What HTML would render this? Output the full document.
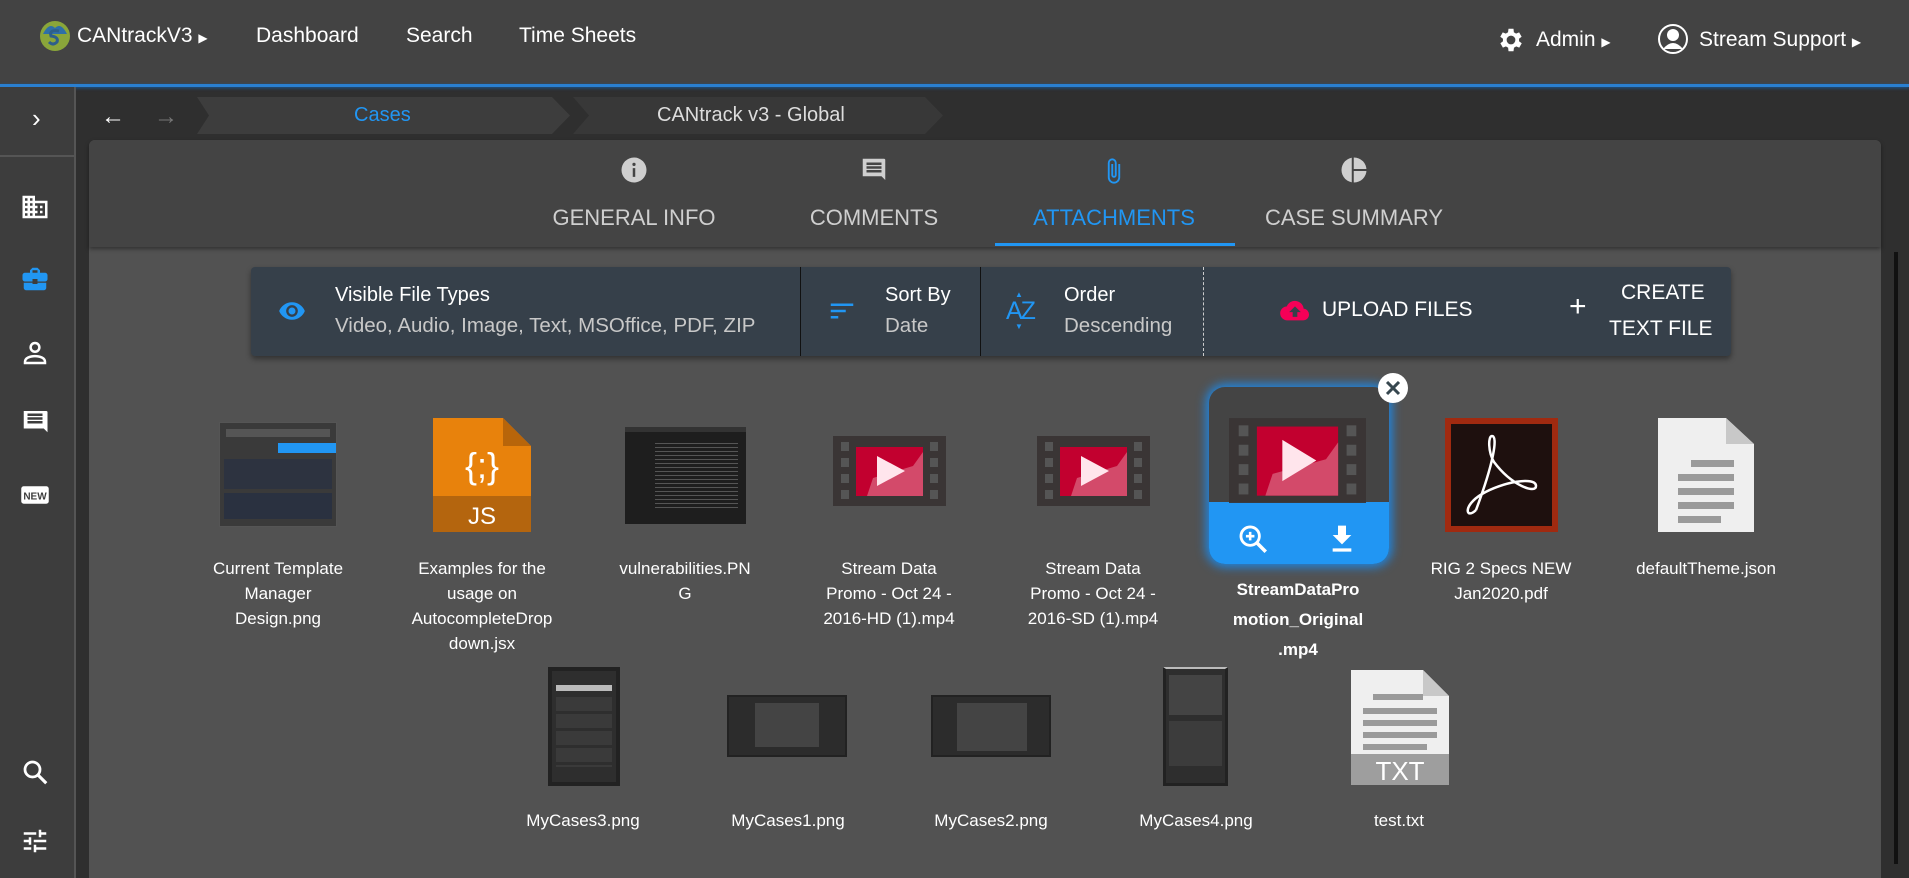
<!DOCTYPE html>
<html><head><meta charset="utf-8"><style>
*{box-sizing:border-box;margin:0;padding:0}
body{width:1909px;height:878px;overflow:hidden;background:#2f2f2f;font-family:"Liberation Sans",sans-serif;color:#fff;position:relative}
.a{position:absolute}
.hdr{left:0;top:0;width:1909px;height:85px;background:#434343}
.nav{font-size:21px;top:24px;color:#fff}
.blue{left:0;top:84px;width:1909px;height:3px;background:#2a7fd0;box-shadow:0 1px 3px #1a5a9a}
.side{left:0;top:87px;width:76px;height:791px;background:#3d3d3d;border-right:2px solid #555}
.panel{left:89px;top:140px;width:1792px;height:738px;background:#525252;border-radius:6px 6px 0 0}
.tabs{left:89px;top:140px;width:1792px;height:107px;background:#444;border-radius:6px 6px 0 0;box-shadow:0 2px 4px rgba(0,0,0,.4)}
.tl{top:205px;font-size:22px;color:#cfcfcf;transform:translateX(-50%);white-space:nowrap}
.tb{left:251px;top:267px;width:1480px;height:89px;background:#36404a;border-radius:4px;box-shadow:0 3px 6px rgba(0,0,0,.4)}
.t1{font-size:20px;color:#fff}
.t2{font-size:20.5px;color:#c8c8c8}
.lab{font-size:17px;line-height:25px;color:#fff;text-align:center;width:160px;transform:translateX(-50%)}
</style></head><body>
<div class="a hdr"></div>
<svg class="a" style="left:39px;top:20px" width="32" height="32" viewBox="0 0 32 32"><circle cx="16" cy="16" r="15" fill="#8aa63a"/><path d="M4 14 Q10 2 16 8 Q22 2 28 14" fill="#2e6fa8"/><path d="M20 11 Q10 9 12 16 Q20 17 18 22 Q14 26 10 22" stroke="#2e5f8a" stroke-width="3" fill="none"/></svg>
<div class="a nav" style="left:77px">CANtrackV3 <span style="font-size:12px">&#9654;</span></div>
<div class="a nav" style="left:256px">Dashboard</div>
<div class="a nav" style="left:406px">Search</div>
<div class="a nav" style="left:519px">Time Sheets</div>
<svg class="a" style="left:1496px;top:25px" width="30" height="30" viewBox="0 0 24 24"><path fill="#fff" d="M19.4 13a7.5 7.5 0 000-2l2.1-1.6-2-3.5-2.5 1a7 7 0 00-1.7-1L15 3h-4l-.4 2.9a7 7 0 00-1.7 1l-2.5-1-2 3.5L6.6 11a7.5 7.5 0 000 2l-2.1 1.6 2 3.5 2.5-1a7 7 0 001.7 1L11 21h4l.4-2.9a7 7 0 001.7-1l2.5 1 2-3.5zM13 15.5a3.5 3.5 0 110-7 3.5 3.5 0 010 7z" transform="translate(-1 0)"/></svg>
<div class="a nav" style="left:1536px;top:28px">Admin <span style="font-size:12px">&#9654;</span></div>
<svg class="a" style="left:1657px;top:23px" width="32" height="32" viewBox="0 0 32 32"><circle cx="16" cy="16" r="14" fill="none" stroke="#fff" stroke-width="2"/><circle cx="16" cy="12" r="6" fill="#fff"/><path d="M6 26 Q16 14 26 26" fill="#fff"/></svg>
<div class="a nav" style="left:1699px;top:28px">Stream Support <span style="font-size:12px">&#9654;</span></div>
<div class="a blue"></div>
<div class="a side"></div>
<div class="a" style="left:0;top:155px;width:76px;height:2px;background:#555"></div>
<div class="a" style="left:32px;top:103px;font-size:26px;color:#fff">&#8250;</div>
<svg class="a" style="left:20px;top:192px" width="30" height="30" viewBox="0 0 24 24"><path fill="#fff" d="M12 7V3H2v18h20V7H12zM6 19H4v-2h2v2zm0-4H4v-2h2v2zm0-4H4V9h2v2zm0-4H4V5h2v2zm4 12H8v-2h2v2zm0-4H8v-2h2v2zm0-4H8V9h2v2zm0-4H8V5h2v2zm10 12h-8v-2h2v-2h-2v-2h2v-2h-2V9h8v10zm-2-8h-2v2h2v-2zm0 4h-2v2h2v-2z"/></svg>
<svg class="a" style="left:20px;top:264px" width="30" height="30" viewBox="0 0 24 24"><path fill="#2196f3" d="M10 16v-1H3l0 4c0 1.1.9 2 2 2h14c1.1 0 2-.9 2-2v-4h-7v1h-4zm10-9h-4V5l-2-2h-4L8 5v2H4c-1.1 0-2 .9-2 2v3c0 1.1.9 2 2 2h6v-2h4v2h6c1.1 0 2-.9 2-2V9c0-1.1-.9-2-2-2zm-6 0h-4V5h4v2z"/></svg>
<svg class="a" style="left:20px;top:338px" width="30" height="30" viewBox="0 0 24 24"><path fill="none" stroke="#fff" stroke-width="2" d="M12 4a3.5 3.5 0 110 7 3.5 3.5 0 010-7zM4 19c0-3 4-4.5 8-4.5s8 1.5 8 4.5v1H4z"/></svg>
<svg class="a" style="left:20px;top:406px" width="30" height="30" viewBox="0 0 24 24"><path fill="#fff" d="M21 4H3v14h16l3 3V5a1 1 0 00-1-1zM18 14H6v-2h12zm0-3H6V9h12zm0-3H6V6h12z"/></svg>
<svg class="a" style="left:20px;top:480px" width="30" height="30" viewBox="0 0 24 24"><rect x="1" y="5" width="22" height="14" rx="2" fill="#fff"/><text x="12" y="15.5" font-size="8" font-weight="bold" text-anchor="middle" fill="#3d3d3d" font-family="Liberation Sans">NEW</text></svg>
<svg class="a" style="left:20px;top:757px" width="30" height="30" viewBox="0 0 24 24"><circle cx="10" cy="10" r="6" fill="none" stroke="#fff" stroke-width="2.2"/><path d="M14.5 14.5L21 21" stroke="#fff" stroke-width="2.5"/></svg>
<svg class="a" style="left:20px;top:826px" width="30" height="30" viewBox="0 0 24 24"><path fill="#fff" d="M3 17v2h6v-2H3zM3 5v2h10V5H3zm10 16v-2h8v-2h-8v-2h-2v6h2zM7 9v2H3v2h4v2h2V9H7zm14 4v-2H11v2h10zm-6-4h2V7h4V5h-4V3h-2v6z"/></svg>
<div class="a" style="left:101px;top:103px;font-size:24px;color:#fff">&#8592;</div>
<div class="a" style="left:154px;top:103px;font-size:24px;color:#777">&#8594;</div>
<svg class="a" style="left:197px;top:97px" width="760" height="37"><polygon points="0,0 355,0 373,18.5 355,37 0,37 12,18.5" fill="#3d3d3d"/><polygon points="376,0 728,0 746,18.5 728,37 376,37 392,18.5" fill="#383838"/></svg>
<div class="a" style="left:354px;top:104px;font-size:20px;color:#2196f3">Cases</div>
<div class="a" style="left:657px;top:104px;font-size:20px;color:#ddd">CANtrack v3 - Global</div>
<div class="a panel"></div>
<div class="a tabs"></div>
<svg class="a" style="left:619px;top:155px" width="30" height="30" viewBox="0 0 24 24"><circle cx="12" cy="12" r="10" fill="#cfcfcf"/><rect x="11" y="10.5" width="2" height="7" fill="#444"/><circle cx="12" cy="7.5" r="1.3" fill="#444"/></svg>
<svg class="a" style="left:859px;top:155px" width="30" height="30" viewBox="0 0 24 24"><path fill="#cfcfcf" d="M21 3H3v14h15l3 3V4a1 1 0 00-1-1zM18 14H6v-2h12zm0-3H6V9h12zm0-3H6V6h12z"/></svg>
<svg class="a" style="left:1100px;top:155px" width="28" height="32" viewBox="0 0 24 24"><path fill="none" stroke="#2196f3" stroke-width="1.6" d="M16.5 6v11.5a4.5 4.5 0 01-9 0V5a3 3 0 016 0v10.5a1.5 1.5 0 01-3 0V6"/></svg>
<svg class="a" style="left:1339px;top:155px" width="30" height="30" viewBox="0 0 24 24"><circle cx="12" cy="12" r="10" fill="#cfcfcf"/><path d="M11 2v20M11 12h11" stroke="#444" stroke-width="1.6"/></svg>
<div class="a tl" style="left:634px">GENERAL INFO</div>
<div class="a tl" style="left:874px">COMMENTS</div>
<div class="a tl" style="left:1114px;color:#2196f3">ATTACHMENTS</div>
<div class="a tl" style="left:1354px">CASE SUMMARY</div>
<div class="a" style="left:995px;top:243px;width:240px;height:3px;background:#2196f3"></div>
<div class="a tb"></div>
<div class="a" style="left:800px;top:267px;width:1px;height:89px;background:#111"></div>
<div class="a" style="left:980px;top:267px;width:1px;height:89px;background:#111"></div>
<div class="a" style="left:1203px;top:267px;height:89px;border-left:1px dashed #ccc"></div>
<svg class="a" style="left:276px;top:297px" width="32" height="28" viewBox="0 0 24 24"><path fill="#2196f3" d="M12 4.5C7 4.5 2.7 7.6 1 12c1.7 4.4 6 7.5 11 7.5s9.3-3.1 11-7.5c-1.7-4.4-6-7.5-11-7.5zM12 17a5 5 0 110-10 5 5 0 010 10zm0-8a3 3 0 100 6 3 3 0 000-6z"/></svg>
<div class="a t1" style="left:335px;top:284px">Visible File Types</div>
<div class="a t2" style="left:335px;top:314px">Video, Audio, Image, Text, MSOffice, PDF, ZIP</div>
<svg class="a" style="left:827px;top:296px" width="30" height="30" viewBox="0 0 24 24"><path fill="#2196f3" d="M3 18h6v-2H3v2zM3 6v2h18V6H3zm0 7h12v-2H3v2z"/></svg>
<div class="a t1" style="left:885px;top:284px">Sort By</div>
<div class="a t2" style="left:885px;top:314px">Date</div>
<div class="a" style="left:1006px;top:297px;font-size:25px;color:#2196f3;letter-spacing:-2px">AZ</div>
<div class="a" style="left:1015px;top:290px;font-size:8px;color:#2196f3">&#9650;</div>
<div class="a" style="left:1015px;top:322px;font-size:8px;color:#2196f3">&#9660;</div>
<div class="a t1" style="left:1064px;top:284px">Order</div>
<div class="a t2" style="left:1064px;top:314px">Descending</div>
<svg class="a" style="left:1280px;top:297px" width="30" height="28" viewBox="0 0 24 24"><path fill="#f50057" d="M19.4 10A7.5 7.5 0 005 8a6 6 0 00.6 12h13a5 5 0 00.8-10zM14 13v4h-4v-4H7l5-5 5 5h-3z"/></svg>
<div class="a" style="left:1322px;top:298px;font-size:21px">UPLOAD FILES</div>
<div class="a" style="left:1569px;top:290px;font-size:30px;color:#fff">+</div>
<div class="a" style="left:1621px;top:281px;font-size:21px">CREATE</div>
<div class="a" style="left:1609px;top:317px;font-size:21px">TEXT FILE</div>
<div class="a" style="left:1894px;top:252px;width:4px;height:612px;background:#111"></div>
<!-- row1 -->
<div class="a" style="left:219px;top:422px;width:118px;height:105px;background:#3a3a3a;border:1px solid #555"><div style="margin:6px;height:8px;background:#555"></div><div style="margin:6px;height:10px;background:#2196f3;width:50%;margin-left:50%"></div><div style="margin:4px;height:30px;background:#2d3340"></div><div style="margin:4px;height:26px;background:#2a3140"></div></div>
<svg class="a" style="left:433px;top:418px" width="98" height="114" viewBox="0 0 98 114"><path d="M0 0h70l28 28v86H0z" fill="#e8820c"/><path d="M70 0v28h28z" fill="#b8650a"/><rect y="78" width="98" height="36" fill="#b4650e"/><text x="49" y="60" font-size="36" text-anchor="middle" fill="#fff" font-family="Liberation Sans">{;}</text><text x="49" y="106" font-size="24" text-anchor="middle" fill="#fff" font-family="Liberation Sans">JS</text></svg>
<div class="a" style="left:625px;top:427px;width:121px;height:97px;background:#1e1e1e;border-top:5px solid #333"><div style="margin:8px 8px 0 30px;height:70px;background:repeating-linear-gradient(#1e1e1e 0 3px,#555 3px 4px)"></div></div>
<svg class="a" style="left:833px;top:436px" width="113" height="70" viewBox="0 0 113 70"><rect width="113" height="70" fill="#3a3535"/><g fill="#555"><rect x="8" y="6" width="8" height="9"/><rect x="8" y="22" width="8" height="9"/><rect x="8" y="38" width="8" height="9"/><rect x="8" y="54" width="8" height="9"/><rect x="97" y="6" width="8" height="9"/><rect x="97" y="22" width="8" height="9"/><rect x="97" y="38" width="8" height="9"/><rect x="97" y="54" width="8" height="9"/></g><rect x="23" y="11" width="67" height="49" fill="#c2002f"/><path d="M34 60l6-18 40-12 10-14v44z" fill="#d34a6a"/><path d="M44 20l28 15-28 15z" fill="#ffe5ec"/></svg>
<svg class="a" style="left:1037px;top:436px" width="113" height="70" viewBox="0 0 113 70"><rect width="113" height="70" fill="#3a3535"/><g fill="#555"><rect x="8" y="6" width="8" height="9"/><rect x="8" y="22" width="8" height="9"/><rect x="8" y="38" width="8" height="9"/><rect x="8" y="54" width="8" height="9"/><rect x="97" y="6" width="8" height="9"/><rect x="97" y="22" width="8" height="9"/><rect x="97" y="38" width="8" height="9"/><rect x="97" y="54" width="8" height="9"/></g><rect x="23" y="11" width="67" height="49" fill="#c2002f"/><path d="M34 60l6-18 40-12 10-14v44z" fill="#d34a6a"/><path d="M44 20l28 15-28 15z" fill="#ffe5ec"/></svg>
<div class="a" style="left:1209px;top:387px;width:180px;height:177px;background:#444;border-radius:16px;box-shadow:0 0 10px 3px #1e88e5;overflow:hidden"><div style="position:absolute;left:0;bottom:0;width:180px;height:62px;background:#2196f3"></div></div>
<svg class="a" style="left:1229px;top:418px" width="137" height="85" viewBox="0 0 113 70"><rect width="113" height="70" fill="#3a3535"/><g fill="#555"><rect x="8" y="6" width="8" height="9"/><rect x="8" y="22" width="8" height="9"/><rect x="8" y="38" width="8" height="9"/><rect x="8" y="54" width="8" height="9"/><rect x="97" y="6" width="8" height="9"/><rect x="97" y="22" width="8" height="9"/><rect x="97" y="38" width="8" height="9"/><rect x="97" y="54" width="8" height="9"/></g><rect x="23" y="7" width="67" height="57" fill="#c2002f"/><path d="M30 64l6-18 44-12 10-14v44z" fill="#d34a6a"/><path d="M44 18l28 17-28 17z" fill="#ffe5ec"/></svg>
<svg class="a" style="left:1236px;top:522px" width="34" height="34" viewBox="0 0 24 24"><circle cx="10" cy="10" r="6.5" fill="none" stroke="#fff" stroke-width="2"/><path d="M14.5 14.5L21 21" stroke="#fff" stroke-width="2.5"/><path d="M10 7v6M7 10h6" stroke="#fff" stroke-width="1.8"/></svg>
<svg class="a" style="left:1326px;top:522px" width="32" height="34" viewBox="0 0 24 24"><path fill="#fff" d="M9 2h6v7h4l-7 7-7-7h4zM5 19h14v2.5H5z"/></svg>
<svg class="a" style="left:1377px;top:372px" width="32" height="32"><circle cx="16" cy="16" r="15" fill="#fff"/><path d="M10 10l12 12M22 10L10 22" stroke="#37474f" stroke-width="3"/></svg>
<div class="a" style="left:1445px;top:418px;width:113px;height:114px;background:#1e100e;border:6px solid #a02a10"></div>
<svg class="a" style="left:1462px;top:432px" width="80" height="86" viewBox="0 0 80 86"><path d="M14 78 C4 88 0 74 20 62 C40 50 74 44 74 54 C74 62 50 54 32 30 C26 20 26 4 30 4 C36 4 32 30 14 78" fill="none" stroke="#fff" stroke-width="2.5"/></svg>
<svg class="a" style="left:1658px;top:418px" width="96" height="114" viewBox="0 0 96 114"><path d="M0 0h68l28 26v88H0z" fill="#efefef"/><path d="M68 0v26h28z" fill="#c8c8c8"/><g fill="#9a9a9a"><rect x="33" y="42" width="43" height="7"/><rect x="20" y="56" width="56" height="7"/><rect x="20" y="70" width="56" height="7"/><rect x="20" y="84" width="56" height="7"/><rect x="20" y="98" width="43" height="7"/></g></svg>
<div class="a lab" style="left:278px;top:556px;width:150px">Current Template Manager Design.png</div>
<div class="a lab" style="left:482px;top:556px;width:150px">Examples for the usage on AutocompleteDrop down.jsx</div>
<div class="a lab" style="left:685px;top:556px;width:136px;word-break:break-all">vulnerabilities.PNG</div>
<div class="a lab" style="left:889px;top:556px;width:136px">Stream Data Promo - Oct 24 - 2016-HD (1).mp4</div>
<div class="a lab" style="left:1093px;top:556px;width:136px">Stream Data Promo - Oct 24 - 2016-SD (1).mp4</div>
<div class="a lab" style="left:1298px;top:575px;font-weight:bold;font-size:17px;line-height:30px;width:134px;word-break:break-all">StreamDataPro<br>motion_Original<br>.mp4</div>
<div class="a lab" style="left:1501px;top:556px;width:150px">RIG 2 Specs NEW Jan2020.pdf</div>
<div class="a lab" style="left:1706px;top:556px;width:180px">defaultTheme.json</div>
<!-- row2 -->
<div class="a" style="left:548px;top:667px;width:72px;height:119px;background:#2e2e2e;border:4px solid #222"><div style="margin:14px 4px 0;height:6px;background:#bbb"></div><div style="margin:6px 4px;height:70px;background:repeating-linear-gradient(#3a3a3a 0 14px,#2e2e2e 14px 17px)"></div></div>
<div class="a" style="left:727px;top:695px;width:120px;height:62px;background:#2c2c2c;border:2px solid #222"><div style="margin:6px 0 0 26px;width:64px;height:44px;background:#444"></div></div>
<div class="a" style="left:931px;top:695px;width:120px;height:62px;background:#2c2c2c;border:2px solid #222"><div style="margin:6px 0 0 24px;width:70px;height:48px;background:#444"></div></div>
<div class="a" style="left:1163px;top:667px;width:65px;height:119px;background:#2e2e2e;border:3px solid #222;border-top:2px solid #bbb"><div style="margin:6px 3px;height:40px;background:#444"></div><div style="margin:3px;height:45px;background:#3c3c3c"></div></div>
<svg class="a" style="left:1351px;top:670px" width="98" height="115" viewBox="0 0 98 115"><path d="M0 0h72l26 26v89H0z" fill="#efefef"/><path d="M72 0v26h26z" fill="#c8c8c8"/><g fill="#9a9a9a"><rect x="22" y="24" width="50" height="6"/><rect x="12" y="38" width="74" height="6"/><rect x="12" y="50" width="74" height="6"/><rect x="12" y="62" width="74" height="6"/><rect x="12" y="74" width="64" height="6"/></g><rect y="84" width="98" height="31" fill="#9e9e9e"/><text x="49" y="110" font-size="26" text-anchor="middle" fill="#fff" font-family="Liberation Sans">TXT</text></svg>
<div class="a lab" style="left:583px;top:808px">MyCases3.png</div>
<div class="a lab" style="left:788px;top:808px">MyCases1.png</div>
<div class="a lab" style="left:991px;top:808px">MyCases2.png</div>
<div class="a lab" style="left:1196px;top:808px">MyCases4.png</div>
<div class="a lab" style="left:1399px;top:808px">test.txt</div>
</body></html>
